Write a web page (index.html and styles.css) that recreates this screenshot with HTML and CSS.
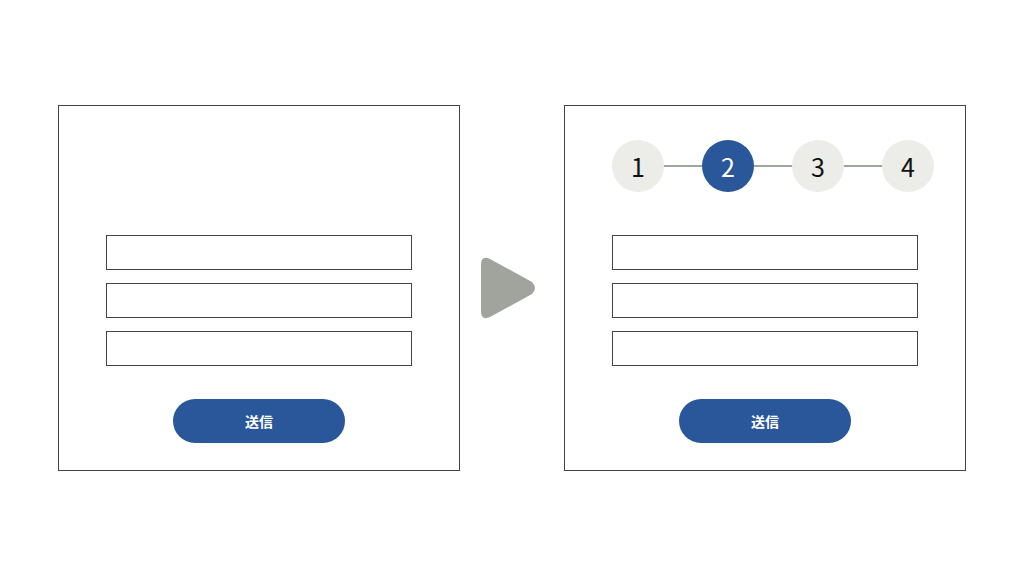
FILE: index.html
```html
<!DOCTYPE html>
<html lang="ja">
<head>
  <meta charset="utf-8">
  <title>Form Steps</title>
  <link rel="stylesheet" href="styles.css">
</head>
<body>
  <div class="stage">
    <div class="panel">
      <div class="steps hidden">
        <span class="step">1</span><span class="line"></span>
        <span class="step">2</span><span class="line"></span>
        <span class="step">3</span><span class="line"></span>
        <span class="step">4</span>
      </div>
      <div class="fields">
        <div class="field"></div>
        <div class="field"></div>
        <div class="field"></div>
      </div>
      <button class="submit">送信</button>
    </div>

    <svg class="arrow" width="58" height="66" viewBox="0 0 58 66">
      <path d="M1 10 Q1 0 10 4 L52 27 Q58 33 52 39 L10 62 Q1 66 1 56 Z" fill="#a0a49d"/>
    </svg>

    <div class="panel">
      <div class="steps">
        <span class="step">1</span><span class="line"></span>
        <span class="step active">2</span><span class="line"></span>
        <span class="step">3</span><span class="line"></span>
        <span class="step">4</span>
      </div>
      <div class="fields">
        <div class="field"></div>
        <div class="field"></div>
        <div class="field"></div>
      </div>
      <button class="submit">送信</button>
    </div>
  </div>
</body>
</html>
```

FILE: styles.css
```css
body {
  margin: 0;
  background-color: #fff;
  font-family: "Noto Sans CJK JP", "Noto Sans", sans-serif;
}
.stage {
  height: 576px;
  padding-left: 58px;
  display: flex;
  align-items: center;
}
.panel {
  box-sizing: border-box;
  width: 402px;
  height: 366px;
  border: 1px solid #444;
  padding: 34px 47px 0;
  display: flex;
  flex-direction: column;
}
.arrow {
  margin: 0 26px 0 20px;
}
.steps {
  display: flex;
  align-items: center;
  height: 52px;
}
.steps.hidden {
  visibility: hidden;
}
.step {
  width: 52px;
  height: 52px;
  border-radius: 50%;
  background-color: #ecece8;
  color: #111;
  font-size: 25px;
  display: flex;
  align-items: center;
  justify-content: center;
  flex-shrink: 0;
}
.step.active {
  background-color: #2a5799;
  color: #fff;
}
.line {
  width: 38px;
  height: 2px;
  flex-shrink: 0;
  background-color: #a0a49e;
}
.fields {
  margin-top: 43px;
  display: flex;
  flex-direction: column;
  gap: 13px;
}
.field {
  box-sizing: border-box;
  width: 306px;
  height: 35px;
  border: 1px solid #444;
}
.submit {
  align-self: center;
  margin-top: 33px;
  width: 172px;
  height: 44px;
  border: none;
  border-radius: 22px;
  background-color: #2a5799;
  color: #fff;
  font-family: "Noto Sans CJK JP", sans-serif;
  font-size: 14px;
  font-weight: bold;
}
```
